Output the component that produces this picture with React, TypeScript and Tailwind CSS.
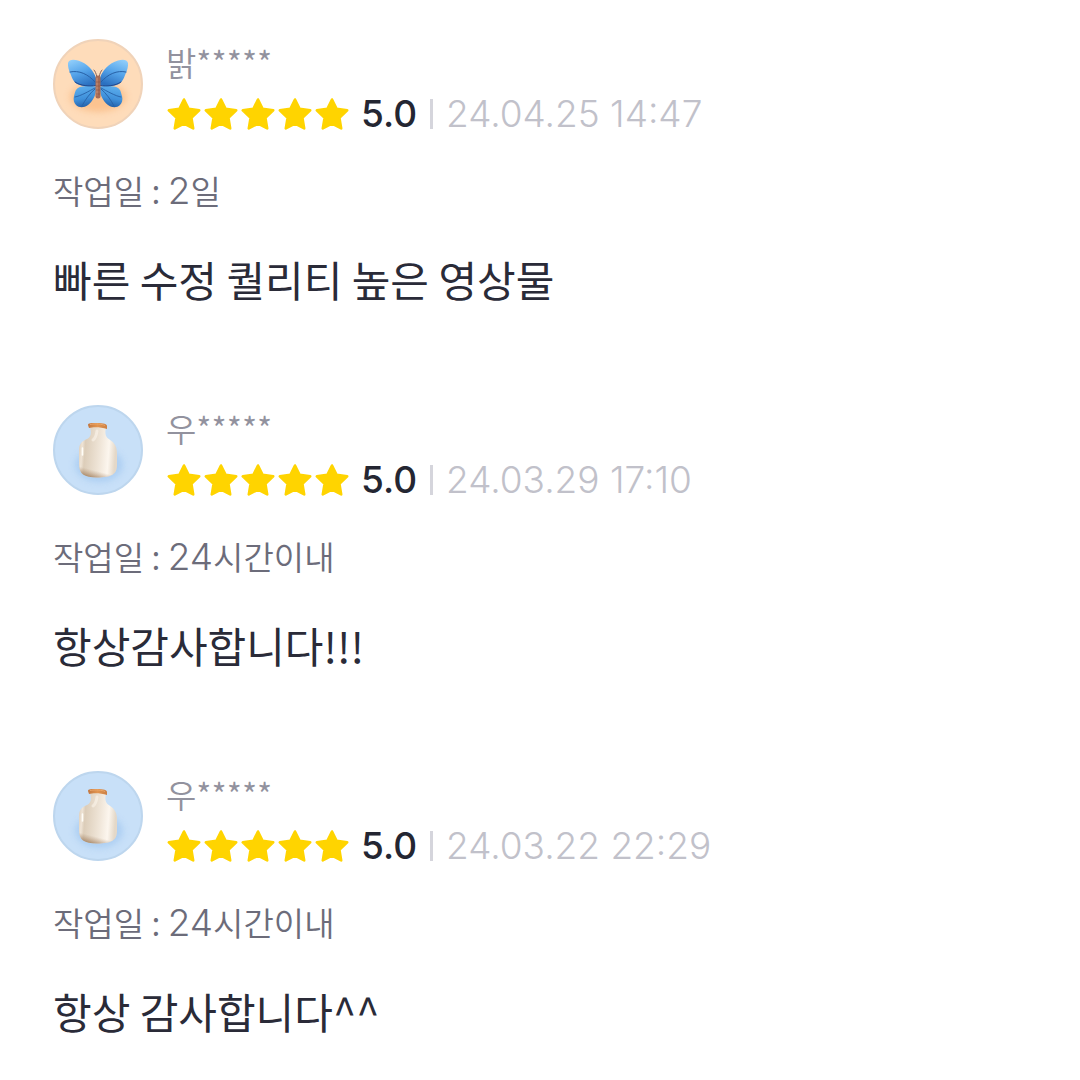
type Avatar = "butterfly" | "milk";

interface Review {
  avatar: Avatar;
  name: string;
  date: string;
  days: string;
  unit: string;
  text: string;
}

const reviews: Review[] = [
  { avatar: "butterfly", name: "밝*****", date: "24.04.25 14:47", days: "2", unit: "일", text: "빠른 수정 퀄리티 높은 영상물" },
  { avatar: "milk", name: "우*****", date: "24.03.29 17:10", days: "24", unit: "시간이내", text: "항상감사합니다!!!" },
  { avatar: "milk", name: "우*****", date: "24.03.22 22:29", days: "24", unit: "시간이내", text: "항상 감사합니다^^" },
];

function Butterfly() {
  return (
    <svg viewBox="2 2 86 86" className="size-full" aria-hidden="true">
      <defs>
        <linearGradient id="upperWing" x1="0.2" y1="0" x2="0.6" y2="1">
          <stop offset="0" stopColor="#8fcdfa" />
          <stop offset="0.5" stopColor="#55a4ea" />
          <stop offset="1" stopColor="#2b70c0" />
        </linearGradient>
        <linearGradient id="lowerWing" x1="0.3" y1="0" x2="0.5" y2="1">
          <stop offset="0" stopColor="#5fb0ee" />
          <stop offset="0.6" stopColor="#3f90da" />
          <stop offset="1" stopColor="#235fa8" />
        </linearGradient>
        <filter id="wingShadow" x="-30%" y="-30%" width="160%" height="160%">
          <feGaussianBlur stdDeviation="3" />
        </filter>
        <g id="wing">
          <path d="M43 47.5C36 46.5 28 47 25 49C22 51 22 54 21 57C20 61 21 64 23 66C26 69 31 69 35 66C40 62 43 56 43 50Z" fill="url(#lowerWing)" />
          <path d="M43 46.5C37 47.5 29 47.5 24 45C19.5 42 19 38 17.5 35C16 32 14.5 27 15 24C16 20 21 20.5 25 21.5C34 24 41 32 43 39Z" fill="url(#upperWing)" />
          <path d="M17 33C26 31 35 35 42 43" fill="none" stroke="#2861a6" strokeWidth="1" strokeLinecap="round" />
          <path d="M22 43C28 47 36 47.5 43 46.5" fill="none" stroke="#24498c" strokeWidth="1" strokeLinecap="round" />
          <path d="M22 58C28 57 36 52 42 49M29 67C32 61 37 54 42 50" fill="none" stroke="#2861a6" strokeWidth="0.9" strokeLinecap="round" />
        </g>
      </defs>
      <ellipse cx="45" cy="58" rx="28" ry="15" fill="#f9b274" opacity="0.6" filter="url(#wingShadow)" />
      <use href="#wing" />
      <use href="#wing" transform="translate(90 0) scale(-1 1)" />
      <path d="M44 38C43 34 42 32 41 31M46 38C47 34 48 32 49 31" fill="none" stroke="#866258" strokeWidth="1" strokeLinecap="round" />
      <rect x="42.5" y="36.5" width="5" height="23" rx="2.5" fill="#a66b55" />
      <path d="M44 39V56" stroke="#c78d73" strokeWidth="1.2" strokeLinecap="round" />
      <path d="M43 43H47M43 47H47M43 51H47M43 55H47" stroke="#895342" strokeWidth="0.6" />
    </svg>
  );
}

function MilkBottle() {
  return (
    <svg viewBox="2 2 86 86" className="size-full" aria-hidden="true">
      <defs>
        <linearGradient id="milkBody" x1="0" y1="0" x2="1" y2="0.1">
          <stop offset="0" stopColor="#d9c8b3" />
          <stop offset="0.12" stopColor="#efe4d6" />
          <stop offset="0.2" stopColor="#dccdb9" />
          <stop offset="0.6" stopColor="#f0e6d9" />
          <stop offset="0.82" stopColor="#fcf6ee" />
          <stop offset="1" stopColor="#e4d8c8" />
        </linearGradient>
        <linearGradient id="milkShade" x1="0.6" y1="0" x2="0.4" y2="1">
          <stop offset="0.86" stopColor="#a7896d" stopOpacity="0" />
          <stop offset="1" stopColor="#99734f" stopOpacity="0.65" />
        </linearGradient>
        <linearGradient id="milkCap" x1="0" y1="0" x2="1" y2="0">
          <stop offset="0" stopColor="#c27740" />
          <stop offset="0.5" stopColor="#e29550" />
          <stop offset="1" stopColor="#cb8046" />
        </linearGradient>
        <filter id="bottleShadow" x="-30%" y="-30%" width="160%" height="160%">
          <feGaussianBlur stdDeviation="3" />
        </filter>
        <path id="bottle" d="M37 22C38.5 27 38.5 31 35 33.5C29 36 26 38.5 26 45V59C26 69 31 72.5 44 72.5C59 72.5 64 69 64 60V48C64 40 60 36.5 55 33.5C52 31 52 27 53 22Z" />
      </defs>
      <ellipse cx="46" cy="60" rx="24" ry="17" fill="#a3c8f0" opacity="0.7" filter="url(#bottleShadow)" />
      <use href="#bottle" fill="url(#milkBody)" />
      <use href="#bottle" fill="url(#milkShade)" />
      <path d="M44 26C43 31 43 33 40 35" fill="none" stroke="#fffaf2" strokeWidth="3" strokeLinecap="round" opacity="0.5" />
      <path d="M29.5 43V50" stroke="#fffdf8" strokeWidth="1.6" strokeLinecap="round" />
      <path d="M35 20C35 18 38 18 44 18C51 18 54 19 54 21V24C48 22 40 22 36 23Z" fill="url(#milkCap)" />
      <path d="M37 19.5C42 18.5 49 19 52 20.5" fill="none" stroke="#f0ad70" strokeWidth="0.8" />
    </svg>
  );
}

function Star() {
  return (
    <svg viewBox="0 0 36 36" className="size-9" aria-hidden="true">
      <path
        d="M18 3.5L22.6 12.8L33.2 14.4L25.4 21.8L27.2 32.4L18 27.6L8.8 32.4L10.6 21.8L2.8 14.4L13.4 12.8Z"
        fill="#ffd400"
        stroke="#ffd400"
        strokeWidth="2.6"
        strokeLinejoin="round"
      />
    </svg>
  );
}

function ReviewItem({ review }: { review: Review }) {
  return (
    <article>
      <header className="flex items-start gap-[23px]">
        {review.avatar === "butterfly" ? (
          <div className="size-[90px] shrink-0 overflow-hidden rounded-full border-2 border-[#f0d3b9] bg-[#fedcba]">
            <Butterfly />
          </div>
        ) : (
          <div className="size-[90px] shrink-0 overflow-hidden rounded-full border-2 border-[#bdd6ee] bg-[#c8e0f8]">
            <MilkBottle />
          </div>
        )}
        <div className="flex flex-col gap-3 pt-[3px]">
          <p className="text-[33px] leading-10 text-[#92929e]">{review.name}</p>
          <div className="flex items-center font-['Inter','Noto_Sans_CJK_KR',sans-serif] text-[37px] leading-10">
            <div className="flex gap-px" role="img" aria-label="별점 5점">
              {[1, 2, 3, 4, 5].map((n) => (
                <Star key={n} />
              ))}
            </div>
            <strong className="ml-[11px] font-medium text-[#242632]">5.0</strong>
            <span className="mx-[13px] h-[30px] w-[3px] bg-[#d5d5dc]" />
            <time className="font-light text-[#c1c1ca]">{review.date}</time>
          </div>
        </div>
      </header>
      <p className="mt-8 text-[33px] leading-[48px] text-[#6c6c7a]">
        작업일 :{" "}
        <span className="font-['Inter','Noto_Sans_CJK_KR',sans-serif] text-[37px] font-light">{review.days}</span>
        {review.unit}
      </p>
      <p className="mt-[34px] text-[42px] leading-[60px] font-normal text-[#2a2b38]">{review.text}</p>
    </article>
  );
}

export default function App() {
  return (
    <main className="flex min-h-screen flex-col gap-24 bg-white px-[53px] pt-[39px] font-['Noto_Sans_CJK_KR',sans-serif] font-[350]">
      {reviews.map((review) => (
        <ReviewItem key={review.date} review={review} />
      ))}
    </main>
  );
}
